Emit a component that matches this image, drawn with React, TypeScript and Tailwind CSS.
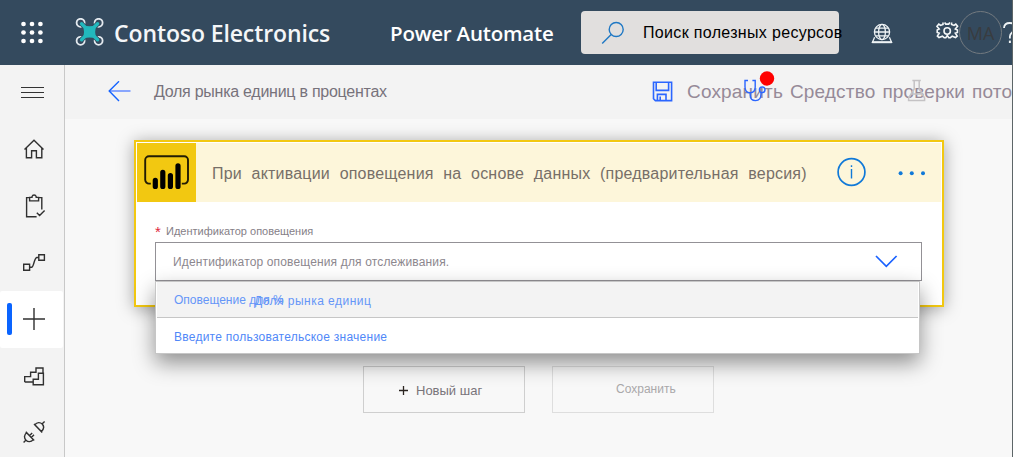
import React, { type ReactNode } from "react";

function Waffle() {
  return (
    <svg className="block shrink-0" width="24" height="24" fill="#fff">
      {[3, 11.5, 20].map((y) =>
        [3.5, 12, 20.4].map((x) => <circle key={`${x}-${y}`} cx={x} cy={y} r="2.35" />),
      )}
    </svg>
  );
}

function ContosoLogo() {
  return (
    <svg className="block shrink-0" width="30" height="30" viewBox="0 0 30 30" fill="none">
      <g stroke="#e4eaef" strokeWidth="1.8">
        <circle cx="5.6" cy="4.8" r="4" />
        <circle cx="23.6" cy="4.8" r="4" />
        <circle cx="5.6" cy="22.8" r="4" />
        <circle cx="23.6" cy="22.8" r="4" />
      </g>
      <path d="M5.8 5L23.4 22.6M23.4 5L5.8 22.6" stroke="#344a5e" strokeWidth="5" />
      <path d="M6.6 5.8L22.6 21.8M22.6 5.8L6.6 21.8" stroke="#22b8bd" strokeWidth="3.4" strokeLinecap="round" />
      <path d="M8.2 7Q14.6 9.4 21 7Q19.4 13.8 21 20.6Q14.6 18.2 8.2 20.6Q9.8 13.8 8.2 7Z" fill="#22b8bd" />
    </svg>
  );
}

function SearchIcon() {
  return (
    <svg className="block shrink-0" width="24" height="24" fill="none" stroke="#1f78c4" strokeWidth="1.4">
      <circle cx="15.2" cy="8.5" r="7" />
      <path d="M10.2 13.5L1.2 22.5" />
    </svg>
  );
}

function GlobeIcon() {
  return (
    <svg className="block shrink-0" width="22" height="22" fill="none" stroke="#eef3f5" strokeWidth="1.3">
      <circle cx="11" cy="9" r="7.6" />
      <ellipse cx="11" cy="9" rx="3.4" ry="7.6" />
      <path d="M3.4 9H18.6M4.6 5.2H17.4M4.6 12.8H17.4" />
      <path d="M3.6 14.2L1.4 19.3H20.6L18.4 14.2" />
      <path d="M1.2 19.2H20.8" strokeWidth="2" />
    </svg>
  );
}

function GearIcon() {
  return (
    <svg className="block shrink-0" width="23" height="17" fill="none" stroke="#f4f7f8" strokeWidth="1.6">
      <circle cx="11.2" cy="9" r="3.2" />
      <path d="M7 .4V2.4L4.6 3.4L2.8 2L.9 4.3L3.2 7L1.2 8V10.5L3.2 11.2L1.4 14L3 15.5L6.4 14.2L8.2 15.7H9.8L11.3 13.5L12.8 15.7H14.4L16.2 14.2L19.5 15.5L21.2 14L19.3 11.2L21.4 10.5V8L19.3 7L21.6 4.3L19.8 2L18 3.4L15.6 2.4V.4" />
      <path d="M8.6 .5L9.8 2.1H12.7L13.9 .5" />
    </svg>
  );
}

function HelpIcon() {
  return (
    <svg className="block shrink-0" width="14" height="23" fill="none" stroke="#eef3f5" strokeWidth="1.8">
      <path d="M1 6C1.2 2.6 3.6 1 6.8 1C10 1 12.6 2.8 12.6 5.6C12.6 9.6 6.9 9.8 6.9 14.5V16.5" />
      <path d="M6.9 18.6V21" strokeWidth="2" />
    </svg>
  );
}

function Header() {
  return (
    <header className="flex h-[65px] shrink-0 items-center overflow-hidden bg-[#344a5e] pl-5 whitespace-nowrap">
      <Waffle />
      <div className="ml-[31px] shrink-0">
        <ContosoLogo />
      </div>
      <span className="ml-[9px] w-[276px] shrink-0 font-['Open_Sans',sans-serif] text-[23px] leading-[30px] font-semibold tracking-[-0.11px] text-[#f4f6f8]">
        Contoso Electronics
      </span>
      <span className="w-[191px] shrink-0 font-['Open_Sans',sans-serif] text-[20.5px] leading-[30px] font-semibold tracking-[-0.2px] text-white">
        Power Automate
      </span>
      <div className="flex h-[43px] w-[258px] shrink-0 items-center rounded-[4px] bg-[#e1dfde] pl-5">
        <SearchIcon />
        <span className="ml-[18px] text-[16px] tracking-[0.33px] text-black">Поиск полезных ресурсов</span>
      </div>
      <div className="mt-[3px] ml-[32px] shrink-0">
        <GlobeIcon />
      </div>
      <div className="ml-[43px] -mt-1 shrink-0">
        <GearIcon />
      </div>
      <div className="flex h-[43px] w-[43px] shrink-0 items-center justify-center rounded-full border border-[#737a80] pt-0.5 font-['Open_Sans',sans-serif] text-[18px] text-[#393c40]">
        MA
      </div>
      <div className="mt-0.5 ml-px shrink-0">
        <HelpIcon />
      </div>
    </header>
  );
}

function NavItem({ children, active = false }: { children: ReactNode; active?: boolean }) {
  return (
    <div
      className={
        active
          ? "flex h-[57px] w-[63px] shrink-0 items-center rounded-[2px] bg-white pl-[7px]"
          : "flex h-[56.5px] shrink-0 items-center pl-[22px]"
      }
    >
      {active && <span className="mr-[10px] h-8 w-[5px] rounded-[2px] bg-[#0a64ff]" />}
      <svg className="block" width="24" height="24" fill="none" stroke="#303030" strokeWidth="1.4">
        {children}
      </svg>
    </div>
  );
}

function Sidebar() {
  return (
    <nav className="flex w-[65px] shrink-0 flex-col border-r border-[#c8c8c8] bg-[#f3f3f3]">
      <div className="flex h-14 shrink-0 items-center pl-[21px]">
        <svg className="block" width="24" height="20" stroke="#333" strokeWidth="1">
          <path d="M0 4.5H23M0 9.5H23M0 14.5H23" />
        </svg>
      </div>
      <div className="flex shrink-0 flex-col">
        <NavItem>
          <path d="M2.5 12.5L12 3.3L21.5 12.5M4.4 10.8V20.8H9.6V13.7H14.4V20.8H19.8V10.8" />
        </NavItem>
        <NavItem>
          <path d="M8 3.6H4.6V22.7H14.6M16.2 3.6H19.8V15.5" />
          <path d="M7.6 3.4H10V2.6A2.2 2.2 0 0 1 14.2 2.6V3.4H16.6V6.9H7.6ZM14.8 18.8L17.6 21.6L22.6 16.4" />
        </NavItem>
        <NavItem>
          <path d="M1.7 14.3H7.6V20.3H1.7ZM16.8 4.7H22.4V10.3H16.8ZM7.6 17.3H9.6C12 17.3 12 7.5 15 7.5H16.8" />
        </NavItem>
        <NavItem active>
          <path d="M1 12H23M12 1V23" />
        </NavItem>
        <NavItem>
          <path d="M2.7 18V12.6H8.6V8.2H14V4H21V8.8M2.7 18H11M21.4 9.2V20.8H11.2V15.2H16.4V9.2Z" />
        </NavItem>
        <NavItem>
          <path d="M1.6 22.4L4.2 19.8M4.6 12.8L11.2 19.6C9 22.4 5.8 22 4 20.2C2 18.2 1.8 15.2 4.6 12.8ZM7.6 15.6L10.2 13M9.4 17.4L12 14.8M12.8 4.8L19.4 11.4C22 9 22 6 20.2 4C18.2 2.2 15.2 2 12.8 4.8ZM20 4L22.6 1.4M3.8 11.8L12.2 20.4M12 4L20.2 12.4" />
        </NavItem>
      </div>
    </nav>
  );
}

function Toolbar() {
  return (
    <div className="relative flex h-[54px] shrink-0 items-center overflow-hidden bg-[#f3f3f3] pl-[43px] whitespace-nowrap">
      <svg className="block shrink-0" width="24" height="22" fill="none" stroke="#1463ff" strokeWidth="1.4">
        <path d="M1 10H22.5" stroke="#6f93ff" strokeWidth="1.6" />
        <path d="M11 .3L1.2 10L11 19.9" />
      </svg>
      <span className="mr-auto ml-[22px] text-[16px] tracking-[-0.26px] text-[#77727b]">
        Доля рынка единиц в процентах
      </span>
      <div className="flex w-[360px] shrink-0 items-center">
        <svg className="-mt-0.5 block shrink-0" width="21" height="21" fill="none" stroke="#2b66ff" strokeWidth="1.6">
          <path d="M1.5 1.2H19.6V19.6H3.4L1.5 17.7ZM4.2 1.2V9.4H16.6V1.2M5.4 19.6V13.4H14V19.6M8.2 15.4V19.6" />
        </svg>
        <span className="ml-[14px] text-[19px] tracking-[0.17px] text-[#968a98] [word-spacing:1.5px]">
          Сохранить Средство проверки потока
        </span>
      </div>
      <svg className="absolute top-[6px] left-[678px]" width="34" height="32" fill="none" stroke="#2b66ff" strokeWidth="1.4">
        <path d="M5 9.5H2V16C2 20 4.5 21.8 7 21.8C10 21.8 12.2 20 12.2 16V9.5H9.4M7.2 21.8V24C7.2 27.6 9.4 29.6 12.6 29.6C16.4 29.6 18 27 18 23V21.6" />
        <circle cx="19.2" cy="18.8" r="2.8" />
        <circle cx="24" cy="7.5" r="7.2" fill="#f00" stroke="none" />
      </svg>
      <svg className="absolute top-[14px] left-[842px]" width="20" height="23" fill="none" stroke="#c4c2c4" strokeWidth="1.5">
        <path d="M5.4 1.4H13.8M7.2 1.4V10L1.6 19V21.4H17.6V19L12.2 10V1.4M4.4 15H15" />
      </svg>
    </div>
  );
}

function PowerBiIcon() {
  return (
    <svg className="block shrink-0 bg-[#f2c811]" width="59" height="59" fill="none">
      <path
        d="M13.8 40.6H12A3.8 3.8 0 0 1 8.2 36.8V17A3.8 3.8 0 0 1 12 13.2H47.2A3.8 3.8 0 0 1 51 17V36.8A3.8 3.8 0 0 1 47.2 40.6H44.8"
        stroke="#221c04"
        strokeWidth="1.9"
      />
      <path d="M18.3 37.4V43.4M25.8 29.4V43.4M33.4 32.6V43.4M41 22.8V43.4" stroke="#000" strokeWidth="5.2" strokeLinecap="round" />
    </svg>
  );
}

function Card() {
  return (
    <section className="relative flex h-[167px] w-[810px] flex-col border-2 border-[#f2c811] bg-white p-px shadow-[0_2px_16px_rgba(0,0,0,0.35)]">
      <div className="flex h-[59px] shrink-0 items-center bg-[#fdf6da] whitespace-nowrap">
        <PowerBiIcon />
        <h2 className="mt-0.5 ml-[16px] w-[625px] shrink-0 text-[16px] tracking-[0.2px] text-[#776f68] [word-spacing:5px]">
          При активации оповещения на основе данных (предварительная версия)
        </h2>
        <svg className="-mt-0.5 block shrink-0" width="30" height="30" fill="none" stroke="#1079d8" strokeWidth="1.7">
          <circle cx="14.5" cy="15" r="13.4" />
          <path d="M14.5 12V21.5M14.5 8.2V10" strokeWidth="1.4" />
        </svg>
        <svg className="ml-[30px] block shrink-0" width="30" height="6" fill="#1079d8">
          <circle cx="3.6" cy="3.2" r="2" />
          <circle cx="14.8" cy="3.2" r="2" />
          <circle cx="26" cy="3.2" r="2" />
        </svg>
      </div>
      <div className="flex flex-col pt-[21px] pl-[18px]">
        <label className="flex h-[19px] items-start text-[11px] leading-4 text-[#858087]">
          <span className="w-[11px] text-[15px] leading-[17px] text-[#e0263c]">*</span>
          <span>Идентификатор оповещения</span>
        </label>
        <div className="flex h-[39px] w-[767px] items-center justify-between border border-[#939196] pr-[23px] pl-[17px]">
          <span className="text-[12px] tracking-[0.15px] text-[#8c878e]">Идентификатор оповещения для отслеживания.</span>
          <svg className="block" width="23" height="13" fill="none" stroke="#1a62ff" strokeWidth="1.7">
            <path d="M1 1L11.3 11.4L21.6 1" />
          </svg>
        </div>
      </div>
      <ul className="absolute top-[139px] left-[19px] w-[765px] border border-[#c6c6c6] bg-white text-[12px] text-[#6596f8] shadow-[0_9px_20px_rgba(0,0,0,0.42)]">
        <li className="relative mr-px ml-px flex h-9 items-center border-b border-[#c6c6c6] bg-[#f3f3f3] pl-[17px]">
          <span>Оповещение для %</span>
          <span className="absolute top-[11px] left-[97px] leading-4 tracking-[0.47px]">Доля рынка единиц</span>
        </li>
        <li className="flex h-[35px] items-center pt-0.5 pl-[18px] tracking-[0.25px] text-[#5088f8]">
          Введите пользовательское значение
        </li>
      </ul>
    </section>
  );
}

export default function App() {
  return (
    <div className="flex h-[457px] w-[1013px] overflow-hidden bg-[#5d6668] pr-px font-['Liberation_Sans',Arial,sans-serif]">
      <div className="flex w-[1012px] shrink-0 flex-col overflow-hidden">
        <Header />
        <div className="flex min-h-0 grow overflow-hidden">
          <Sidebar />
          <div className="flex min-w-0 grow flex-col bg-[#f8f8f8]">
            <Toolbar />
            <main className="flex grow flex-col pt-[21px] pl-[69px]">
              <Card />
              <div className="mt-[59px] flex gap-[27px] pl-[229px]">
                <button className="flex h-[47px] w-[162px] items-center border border-[#cfcfcf] pt-0.5 pl-[35px] text-[13px] text-[#78747a]">
                  <svg className="mr-[8px] block" width="9" height="9" stroke="#2b2420" strokeWidth="1.3">
                    <path d="M0 4.5H9M4.5 0V9" />
                  </svg>
                  Новый шаг
                </button>
                <button className="flex h-[47px] w-[162px] items-center border border-[#dedede] pb-0.5 pl-[63px] text-[12px] text-[#aaa8aa]">
                  Сохранить
                </button>
              </div>
            </main>
          </div>
        </div>
      </div>
    </div>
  );
}
